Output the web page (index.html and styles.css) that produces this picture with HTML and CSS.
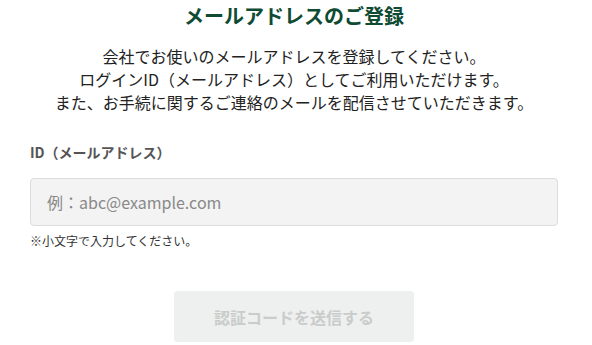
FILE: index.html
```html
<!DOCTYPE html>
<html lang="ja">
<head>
    <meta charset="UTF-8">
    <meta name="viewport" content="width=device-width, initial-scale=1.0">
    <title>メールアドレスのご登録</title>
    <link rel="stylesheet" href="styles.css">
</head>
<body>
    <div class="register">
        <h1 class="register-title">メールアドレスのご登録</h1>
        <p class="register-lead">
            会社でお使いのメールアドレスを登録してください。<br>
            ログインID（メールアドレス）としてご利用いただけます。<br>
            また、お手続に関するご連絡のメールを配信させていただきます。
        </p>

        <form class="register-form" onsubmit="return false;">
            <label class="field-label" for="mail">ID（メールアドレス）</label>
            <input class="field-input" id="mail" type="email" placeholder="例：abc@example.com">
            <p class="field-note">※小文字で入力してください。</p>

            <div class="form-actions">
                <button class="submit-btn" type="submit" disabled>認証コードを送信する</button>
            </div>
        </form>
    </div>
</body>
</html>
```

FILE: styles.css
```css
body {
    margin: 0;
    font-family: "Noto Sans CJK JP", "Noto Sans", sans-serif;
    color: #222;
    background: #fff;
}
.register {
    width: 528px;
    padding: 0 0 0 30px;
}
.register-title {
    margin: 0;
    padding-top: 1px;
    font-size: 20px;
    line-height: 30px;
    font-weight: bold;
    color: #0f4a32;
    text-align: center;
}
.register-lead {
    margin: 14px 0 0;
    font-size: 16px;
    line-height: 23px;
    text-align: center;
    color: #222;
}
.register-form {
    margin-top: 28px;
}
.field-label {
    display: block;
    font-size: 14px;
    line-height: 20px;
    font-weight: bold;
    color: #555;
}
.field-input {
    display: block;
    box-sizing: border-box;
    width: 528px;
    height: 48px;
    margin-top: 16px;
    padding: 0 16px;
    font-family: inherit;
    font-size: 16px;
    color: #333;
    background: #f3f3f3;
    border: 1px solid #dcdcdc;
    border-radius: 4px;
}
.field-input::placeholder {
    color: #888;
}
.field-note {
    margin: 6px 0 0;
    font-size: 12px;
    line-height: 18px;
    color: #333;
}
.form-actions {
    display: flex;
    justify-content: center;
    margin-top: 41px;
}
.submit-btn {
    width: 240px;
    height: 51px;
    font-family: inherit;
    font-size: 16px;
    font-weight: bold;
    color: #c9cccb;
    background: #eef0ef;
    border: none;
    border-radius: 4px;
}
```
